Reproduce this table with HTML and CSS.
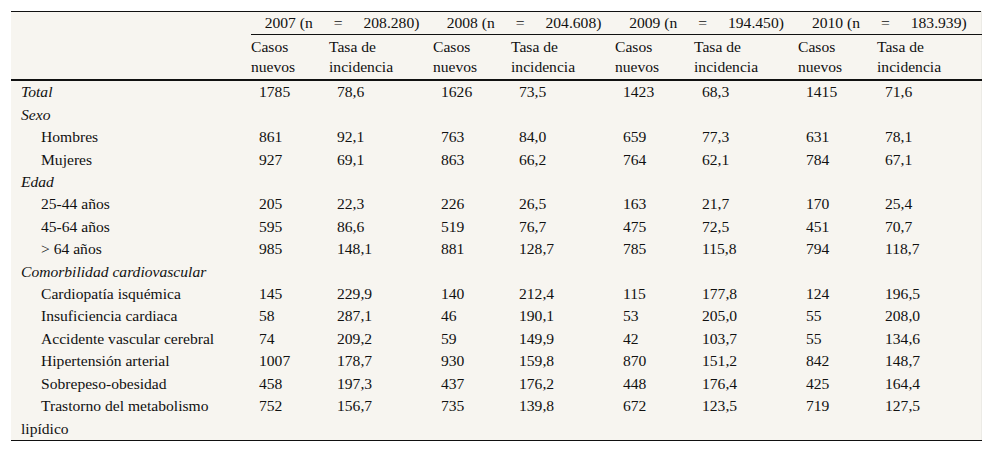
FILE: index.html
```html
<!DOCTYPE html>
<html lang="es">
<head>
<meta charset="utf-8">
<title>Tabla</title>
<link rel="stylesheet" href="styles.css">
</head>
<body>
<div class="wrap">
<table class="tbl">
<colgroup>
<col class="c-label"><col class="c-casos"><col class="c-tasa"><col class="c-casos"><col class="c-tasa"><col class="c-casos2"><col class="c-tasa"><col class="c-casos2"><col class="c-tasa">
</colgroup>
<thead>
<tr class="yr">
<th class="empty" rowspan="2"></th>
<th colspan="2"><span class="yrt"><span>2007 (n</span><span>=</span><span>208.280)</span></span></th>
<th colspan="2"><span class="yrt"><span>2008 (n</span><span>=</span><span>204.608)</span></span></th>
<th colspan="2"><span class="yrt"><span>2009 (n</span><span>=</span><span>194.450)</span></span></th>
<th colspan="2"><span class="yrt"><span>2010 (n</span><span>=</span><span>183.939)</span></span></th>
</tr>
<tr class="sub">
<th>Casos nuevos</th><th>Tasa de incidencia</th>
<th>Casos nuevos</th><th>Tasa de incidencia</th>
<th>Casos nuevos</th><th>Tasa de incidencia</th>
<th>Casos nuevos</th><th>Tasa de incidencia</th>
</tr>
</thead>
<tbody>
<tr><td class="lab it">Total</td><td>1785</td><td>78,6</td><td>1626</td><td>73,5</td><td>1423</td><td>68,3</td><td>1415</td><td>71,6</td></tr>
<tr><td class="lab it">Sexo</td><td></td><td></td><td></td><td></td><td></td><td></td><td></td><td></td></tr>
<tr><td class="lab ind">Hombres</td><td>861</td><td>92,1</td><td>763</td><td>84,0</td><td>659</td><td>77,3</td><td>631</td><td>78,1</td></tr>
<tr><td class="lab ind">Mujeres</td><td>927</td><td>69,1</td><td>863</td><td>66,2</td><td>764</td><td>62,1</td><td>784</td><td>67,1</td></tr>
<tr><td class="lab it">Edad</td><td></td><td></td><td></td><td></td><td></td><td></td><td></td><td></td></tr>
<tr><td class="lab ind">25-44 años</td><td>205</td><td>22,3</td><td>226</td><td>26,5</td><td>163</td><td>21,7</td><td>170</td><td>25,4</td></tr>
<tr><td class="lab ind">45-64 años</td><td>595</td><td>86,6</td><td>519</td><td>76,7</td><td>475</td><td>72,5</td><td>451</td><td>70,7</td></tr>
<tr><td class="lab ind">&gt; 64 años</td><td>985</td><td>148,1</td><td>881</td><td>128,7</td><td>785</td><td>115,8</td><td>794</td><td>118,7</td></tr>
<tr><td class="lab it">Comorbilidad cardiovascular</td><td></td><td></td><td></td><td></td><td></td><td></td><td></td><td></td></tr>
<tr><td class="lab ind">Cardiopatía isquémica</td><td>145</td><td>229,9</td><td>140</td><td>212,4</td><td>115</td><td>177,8</td><td>124</td><td>196,5</td></tr>
<tr><td class="lab ind">Insuficiencia cardiaca</td><td>58</td><td>287,1</td><td>46</td><td>190,1</td><td>53</td><td>205,0</td><td>55</td><td>208,0</td></tr>
<tr><td class="lab ind">Accidente vascular cerebral</td><td>74</td><td>209,2</td><td>59</td><td>149,9</td><td>42</td><td>103,7</td><td>55</td><td>134,6</td></tr>
<tr><td class="lab ind">Hipertensión arterial</td><td>1007</td><td>178,7</td><td>930</td><td>159,8</td><td>870</td><td>151,2</td><td>842</td><td>148,7</td></tr>
<tr><td class="lab ind">Sobrepeso-obesidad</td><td>458</td><td>197,3</td><td>437</td><td>176,2</td><td>448</td><td>176,4</td><td>425</td><td>164,4</td></tr>
<tr><td class="lab ind">Trastorno del metabolismo lipídico</td><td>752</td><td>156,7</td><td>735</td><td>139,8</td><td>672</td><td>123,5</td><td>719</td><td>127,5</td></tr>
</tbody>
</table>
</div>
</body>
</html>
```

FILE: styles.css
```css
html, body {
  margin: 0;
  padding: 0;
  background: #ffffff;
}
.wrap {
  padding: 11px 0 0 11px;
}
.tbl {
  width: 970px;
  table-layout: fixed;
  border-collapse: collapse;
  background: #f7f5f0;
  font-family: "Liberation Serif", "Times New Roman", serif;
  font-size: 15.6px;
  line-height: 22.4px;
  color: #111;
  border-top: 1px solid #111;
  border-bottom: 1px solid #111;
  border-right: 1px solid #ecebe6;
}
.c-label { width: 240px; }
.c-casos { width: 78px; }
.c-casos2 { width: 79px; }
.c-tasa { width: 104px; }
th, td {
  padding: 0;
  text-align: left;
  vertical-align: top;
  font-weight: normal;
}
.yr th {
  border-bottom: 1px solid #111;
  text-align: center;
  height: 22px;
}
.yr th.empty {
  border-bottom: 2px solid #111;
}
.yrt {
  display: inline-flex;
  gap: 21px;
}
.sub th {
  border-bottom: 2px solid #111;
  line-height: 20px;
  padding: 2px 0 2px 0;
}
tbody td {
  padding-left: 8px;
}
tbody td.lab {
  padding-left: 10px;
}
.it {
  font-style: italic;
}
.ind {
  text-indent: 20px;
}
```
